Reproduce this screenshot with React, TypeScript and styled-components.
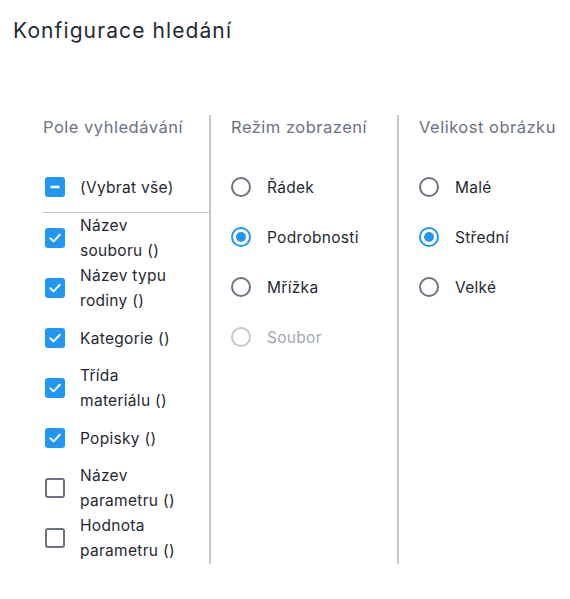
import React from "react";
import styled, { createGlobalStyle } from "styled-components";

const Global = createGlobalStyle`
  html, body { margin: 0; padding: 0; background: #ffffff; }
  body { font-family: Inter, "Noto Sans", sans-serif; color: #1f2933; }
`;

const Page = styled.div`
  width: 570px;
  height: 599px;
  box-sizing: border-box;
  padding: 17px 0 0 13px;
`;

const Title = styled.h1`
  margin: 0;
  font-size: 21px;
  font-weight: 400;
  line-height: 28px;
  letter-spacing: 1.1px;
  color: #1f2933;
`;

const Columns = styled.div`
  display: flex;
  margin: 70px 0 0 30px;
`;

const Column = styled.div<{ $w: number; $pad: number; $border?: boolean }>`
  width: ${(p) => p.$w}px;
  box-sizing: border-box;
  padding-left: ${(p) => p.$pad}px;
  border-right: ${(p) => (p.$border ? "2px solid #c3c7cc" : "none")};
  display: flex;
  flex-direction: column;
  padding-bottom: 1px;
`;

const Header = styled.div`
  height: 25px;
  line-height: 25px;
  font-size: 16.5px;
  letter-spacing: 0.5px;
  color: #6b7280;
  margin-bottom: 22px;
  white-space: nowrap;
`;

const Row = styled.label<{ $divider?: boolean }>`
  display: flex;
  align-items: center;
  box-sizing: border-box;
  border-bottom: ${(p) => (p.$divider ? "1px solid #c3c7cc" : "none")};
  height: ${(p) => (p.$divider ? 51 : 50)}px;
`;

const Label = styled.span<{ $disabled?: boolean }>`
  font-size: 15.5px;
  line-height: 25px;
  letter-spacing: 0.3px;
  white-space: nowrap;
  color: ${(p) => (p.$disabled ? "#a3a8b0" : "#1f2933")};
`;

const Box = styled.span<{ $on: boolean }>`
  flex: none;
  width: 20px;
  height: 20px;
  box-sizing: border-box;
  margin: 0 15px 0 2px;
  border-radius: 3px;
  border: ${(p) => (p.$on ? "none" : "2px solid #6b7280")};
  background: ${(p) => (p.$on ? "#2196f3" : "#fff")};
  display: flex;
  align-items: center;
  justify-content: center;
`;

const Radio = styled.span<{ $on?: boolean; $disabled?: boolean }>`
  flex: none;
  width: 20px;
  height: 20px;
  box-sizing: border-box;
  margin-right: 16px;
  border-radius: 50%;
  border: 2px solid
    ${(p) => (p.$disabled ? "#c8c8c8" : p.$on ? "#2196f3" : "#6b7280")};
  display: flex;
  align-items: center;
  justify-content: center;
`;

const Dot = styled.span`
  width: 10px;
  height: 10px;
  border-radius: 50%;
  background: #2196f3;
`;

const Check = () => (
  <svg width="14" height="14" viewBox="0 0 14 14">
    <path d="M2.3 7.2 L5.6 10.4 L11.8 3.8" fill="none" stroke="#fff" strokeWidth="2" strokeLinecap="round" strokeLinejoin="round" />
  </svg>
);

const Dash = () => (
  <svg width="14" height="14" viewBox="0 0 14 14">
    <path d="M2.5 7 H11.5" stroke="#fff" strokeWidth="2.6" />
  </svg>
);

const fields: { text: React.ReactNode; on: boolean }[] = [
  { text: <>Název<br />souboru ()</>, on: true },
  { text: <>Název typu<br />rodiny ()</>, on: true },
  { text: "Kategorie ()", on: true },
  { text: <>Třída<br />materiálu ()</>, on: true },
  { text: "Popisky ()", on: true },
  { text: <>Název<br />parametru ()</>, on: false },
  { text: <>Hodnota<br />parametru ()</>, on: false },
];

const modes = [
  { text: "Řádek", on: false, disabled: false },
  { text: "Podrobnosti", on: true, disabled: false },
  { text: "Mřížka", on: false, disabled: false },
  { text: "Soubor", on: false, disabled: true },
];

const sizes = [
  { text: "Malé", on: false },
  { text: "Střední", on: true },
  { text: "Velké", on: false },
];

export default function App() {
  return (
    <Page>
      <Global />
      <Title>Konfigurace hledání</Title>
      <Columns>
        <Column $w={168} $pad={0} $border>
          <Header>Pole vyhledávání</Header>
          <Row $divider>
            <Box $on>
              <Dash />
            </Box>
            <Label>(Vybrat vše)</Label>
          </Row>
          {fields.map((f, i) => (
            <Row key={i}>
              <Box $on={f.on}>{f.on && <Check />}</Box>
              <Label>{f.text}</Label>
            </Row>
          ))}
        </Column>
        <Column $w={188} $pad={20} $border>
          <Header>Režim zobrazení</Header>
          {modes.map((m) => (
            <Row key={m.text}>
              <Radio $on={m.on} $disabled={m.disabled}>{m.on && <Dot />}</Radio>
              <Label $disabled={m.disabled}>{m.text}</Label>
            </Row>
          ))}
        </Column>
        <Column $w={171} $pad={20}>
          <Header>Velikost obrázku</Header>
          {sizes.map((s) => (
            <Row key={s.text}>
              <Radio $on={s.on}>{s.on && <Dot />}</Radio>
              <Label>{s.text}</Label>
            </Row>
          ))}
        </Column>
      </Columns>
    </Page>
  );
}
